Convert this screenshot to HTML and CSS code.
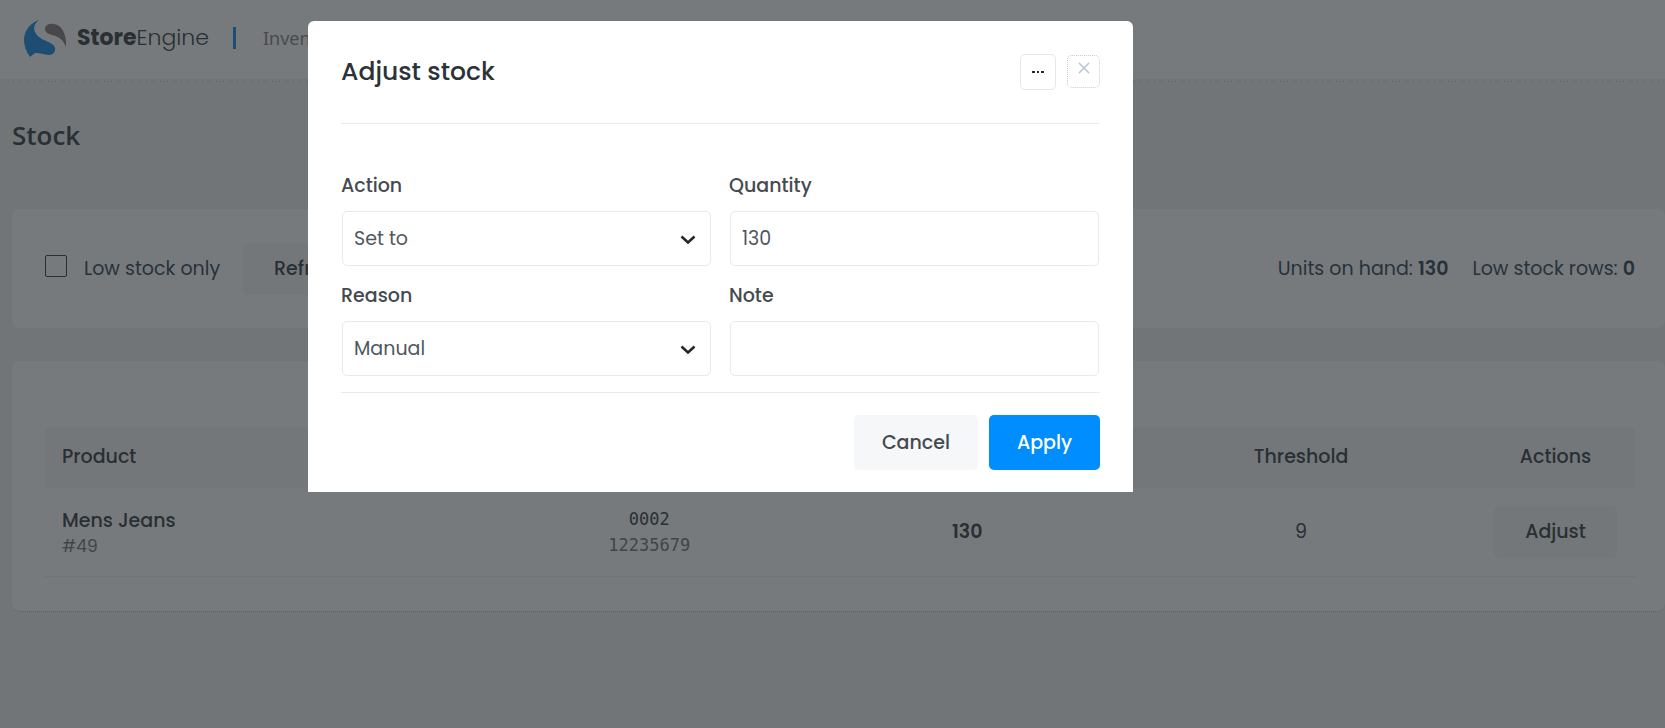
FILE: index.html
```html
<!DOCTYPE html>
<html lang="en">
<head>
    <meta charset="UTF-8">
    <meta name="viewport" content="width=device-width, initial-scale=1.0">
    <title>Stock - StoreEngine</title>
    <link rel="stylesheet" href="styles.css">
</head>
<body>
    <header class="topbar">
        <svg class="logo" viewBox="0 0 44 40" aria-hidden="true">
            <path fill="#0080e0" d="M15 2C6 5 0 13 0 22c0 6 2 11 6 17l5-4c6 0 10 2 15 2 6-1 7-8 2-11-6-4-14-5-17-12C9 9 11 5 15 2z"/>
            <path fill="#7c6f6f" d="M21 11c0-4 4-6 9-5 8 1 13 11 12 23-3-8-8-11-14-12-4-1-7-3-7-6z"/>
        </svg>
        <span class="brand"><b>Store</b>Engine</span>
        <span class="divider"></span>
        <span class="section">Inventory</span>
    </header>

    <main>
        <h1>Stock</h1>

        <section class="card toolbar">
            <input type="checkbox" id="lowStock">
            <label for="lowStock">Low stock only</label>
            <button class="btn small" type="button">Refresh</button>
            <div class="totals">
                <span>Units on hand: <b>130</b></span>
                <span>Low stock rows: <b>0</b></span>
            </div>
        </section>

        <section class="card list">
            <table>
                <thead>
                    <tr>
                        <th class="col-product">Product</th>
                        <th class="col-sku">SKU</th>
                        <th class="col-stock">Stock</th>
                        <th class="col-threshold">Threshold</th>
                        <th class="col-actions">Actions</th>
                    </tr>
                </thead>
                <tbody>
                    <tr>
                        <td class="col-product">Mens Jeans<small>#49</small></td>
                        <td class="code">0002<small>12235679</small></td>
                        <td><b>130</b></td>
                        <td>9</td>
                        <td><button class="btn small" type="button">Adjust</button></td>
                    </tr>
                </tbody>
            </table>
        </section>
    </main>

    <div class="overlay">
        <div class="modal" role="dialog" aria-labelledby="modalTitle">
            <div class="modal-header">
                <h2 id="modalTitle">Adjust stock</h2>
                <button class="icon-btn more" type="button" aria-label="More">
                    <svg width="12" height="2" viewBox="0 0 12 2"><path fill="#23282d" d="M0 0h3v2H0zM5 0h2v2H5zM9 0h3v2H9z"/></svg>
                </button>
                <button class="icon-btn close" type="button" aria-label="Close">
                    <svg width="12" height="12" viewBox="0 0 12 12"><path fill="none" stroke="#b9c4d0" stroke-width="1.5" d="M1 1l10 10M11 1L1 11"/></svg>
                </button>
            </div>

            <form class="fields">
                <div class="field">
                    <label for="action">Action</label>
                    <select id="action">
                        <option>Set to</option>
                    </select>
                </div>
                <div class="field">
                    <label for="quantity">Quantity</label>
                    <input type="text" id="quantity" value="130">
                </div>
                <div class="field">
                    <label for="reason">Reason</label>
                    <select id="reason">
                        <option>Manual</option>
                    </select>
                </div>
                <div class="field">
                    <label for="note">Note</label>
                    <input type="text" id="note">
                </div>
            </form>

            <div class="modal-footer">
                <button class="btn" type="button">Cancel</button>
                <button class="btn primary" type="button">Apply</button>
            </div>
        </div>
    </div>
</body>
</html>
```
FILE: styles.css
```css
* {
    box-sizing: border-box;
}

body {
    margin: 0;
    min-height: 100vh;
    background: #eff0f1;
    color: #3c434a;
    font-family: Poppins, Inter, sans-serif;
    font-size: 19px;
    line-height: 28px;
}

button, input, select {
    font: inherit;
    color: inherit;
}

/* top bar */
.topbar {
    display: flex;
    align-items: center;
    height: 79px;
    padding: 0 24px 4px;
    background: #fff;
}

.logo {
    width: 44px;
    height: 40px;
}

.brand {
    margin-left: 9px;
    font-size: 22px;
    font-weight: 300;
    color: #23282d;
}

.brand b {
    font-weight: 700;
}

.divider {
    width: 3px;
    height: 22px;
    margin: 0 27px 0 24px;
    background: #0080e0;
}

.section {
    font-family: "Noto Sans", sans-serif;
    font-size: 18px;
    color: #7c7676;
}

/* dotted line under the top bar */
main {
    padding-left: 12px;
    background: repeating-linear-gradient(90deg, #b0b3b6 0 1px, transparent 1px 7px) 13px 2px / 100% 1px no-repeat;
}

h1 {
    margin: 0;
    padding: 38px 0 56px;
    font-family: "Open Sans", sans-serif;
    font-size: 26px;
    font-weight: 600;
    line-height: 36px;
    color: #23282d;
}

.card {
    background: #fff;
    border-radius: 8px;
}

/* filter row */
.toolbar {
    display: flex;
    align-items: center;
    height: 119px;
    padding: 0 30px 0 33px;
    color: #1d2f47;
}

.toolbar input {
    appearance: none;
    width: 22px;
    height: 22px;
    margin: 0 17px 5px 0;
    border: 1px solid #23282d;
    border-radius: 2px;
}

.toolbar .btn {
    margin-left: 23px;
}

.totals {
    display: flex;
    gap: 24px;
    margin-left: auto;
}

b {
    font-weight: 600;
}

/* stock table */
.list {
    margin-top: 33px;
    padding: 66px 30px 34px 33px;
    border-bottom: 1px dotted #b0b3b6;
}

table {
    width: 100%;
    table-layout: fixed;
    border-collapse: collapse;
    text-align: center;
    color: #23282d;
}

th {
    height: 61px;
    padding: 0 0 2px;
    background: #f6f7f9;
    font-weight: 500;
}

td {
    height: 88px;
    padding: 0;
    border-bottom: 1px solid #eceef0;
}

.col-product {
    width: 28%;
    padding-left: 17px;
    text-align: left;
    font-weight: 500;
}

.col-sku {
    width: 20%;
}

.col-stock {
    width: 20%;
}

.col-threshold {
    width: 22%;
}

.col-actions {
    width: 10%;
}

td small {
    display: block;
    font-size: 17px;
    font-weight: 400;
    line-height: 22px;
    color: #6c6666;
}

.code,
.code small {
    font-family: Consolas, "DejaVu Sans Mono", monospace;
    font-size: 17px;
    line-height: 26px;
}

/* buttons */
.btn {
    height: 55px;
    padding: 0 28px;
    border: 0;
    border-radius: 5px;
    background: #f6f7f9;
    color: #444a50;
    font-weight: 500;
}

.btn.small {
    height: 52px;
    padding: 0 31px;
    color: #23282d;
}

.btn.primary {
    background: #008dff;
    color: #fff;
}

/* dialog */
.overlay {
    position: fixed;
    inset: 0;
    padding: 21px 18.5%;
    background: rgba(44, 50, 54, 0.65);
}

.modal {
    max-width: 825px;
    padding: 0 33px 22px;
    border-radius: 6px 6px 0 0;
    background: #fff;
}

.modal-header {
    display: flex;
    align-items: center;
    height: 103px;
    border-bottom: 1px solid #e9eaec;
}

h2 {
    margin: 0 auto 0 0;
    font-size: 25px;
    font-weight: 500;
    color: #2c3338;
}

.icon-btn {
    display: flex;
    align-items: center;
    justify-content: center;
    width: 36px;
    height: 36px;
    padding: 0;
    border: 1px solid #e4e6e8;
    border-radius: 5px;
    background: #fff;
}

.close {
    width: 33px;
    height: 33px;
    margin: 0 0 1px 11px;
    padding-bottom: 8px;
    border: 1px dotted #c8cbce;
}

.fields {
    display: grid;
    grid-template-columns: 1fr 1fr;
    gap: 16px 19px;
    padding: 48px 1px 16px;
    border-bottom: 1px solid #e9eaec;
}

.field label {
    display: block;
    margin: 0 0 11px -1px;
    font-weight: 500;
    color: #444a50;
}

.field input,
.field select {
    display: block;
    width: 100%;
    height: 55px;
    padding: 0 11px;
    border: 1px solid #e9eaec;
    border-radius: 5px;
    background: #fff;
    color: #50575e;
}

.field select {
    appearance: none;
    background: #fff url("data:image/svg+xml,%3Csvg xmlns='http://www.w3.org/2000/svg' width='16' height='12' viewBox='0 0 16 12'%3E%3Cpath d='M1.500 3.500l6.500 6 6.500-6' fill='none' stroke='%2323282d' stroke-width='2.600'/%3E%3C/svg%3E") no-repeat right 14px center;
}

.modal-footer {
    display: flex;
    justify-content: flex-end;
    gap: 11px;
    padding-top: 22px;
}
```
